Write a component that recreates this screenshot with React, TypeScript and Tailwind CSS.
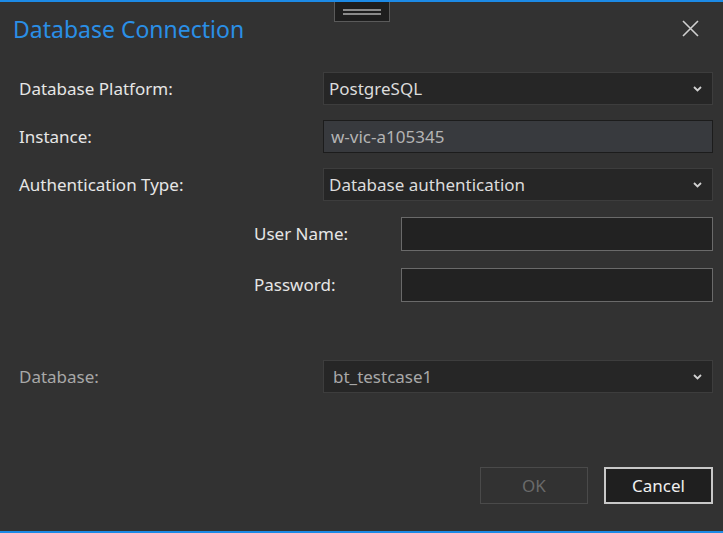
import React from "react";

const font = { fontFamily: '"Noto Sans", "Open Sans", sans-serif' };

function Chevron() {
  return (
    <svg width="9" height="6" viewBox="0 0 9 6" className="shrink-0">
      <path d="M1 1 L4.5 4.5 L8 1" stroke="#d0d0d0" strokeWidth="1.8" fill="none" />
    </svg>
  );
}

function Select({ value, disabled }: { value: string; disabled?: boolean }) {
  return (
    <div
      className={
        disabled
          ? "w-[390px] h-[33px] flex items-center justify-between bg-[#262626] border border-[#3d3d3d] pl-[9px] pr-[10px]"
          : "w-[390px] h-[33px] flex items-center justify-between bg-[#262626] border border-[#3d3d3d] pl-[5px] pr-[10px]"
      }
    >
      <span className={disabled ? "text-[17px] text-[#a8a8a8]" : "text-[17px] text-[#dcdcdc]"}>{value}</span>
      <Chevron />
    </div>
  );
}

export default function App() {
  return (
    <div
      className="relative w-[723px] h-[533px] bg-[#323232] border-t-2 border-b-2 border-[#1c8ae6] flex flex-col overflow-hidden"
      style={font}
    >
      <div className="absolute left-[334px] top-0 w-[56px] h-[20px] border border-t-0 border-[#5a5a5a] bg-[#1e1e1e] flex flex-col items-center justify-center gap-[2px]">
        <div className="w-[38px] h-[2px] bg-[#8a8a8a]" />
        <div className="w-[38px] h-[2px] bg-[#8a8a8a]" />
      </div>

      <div className="flex items-center justify-between pl-[13px] pr-[24px] h-[52px]">
        <span className="text-[23px] text-[#2a8fe6] mt-[2px]">Database Connection</span>
        <svg width="17" height="17" viewBox="0 0 17 17">
          <path d="M1 1 L16 16 M16 1 L1 16" stroke="#cfcfcf" strokeWidth="1.6" />
        </svg>
      </div>

      <div className="flex flex-col pl-[19px] pr-[10px] mt-[18px]">
        <div className="flex items-center justify-between h-[33px]">
          <span className="text-[17px] text-[#e6e6e6]">Database Platform:</span>
          <Select value="PostgreSQL" />
        </div>
        <div className="flex items-center justify-between h-[33px] mt-[15px]">
          <span className="text-[17px] text-[#e6e6e6]">Instance:</span>
          <div className="w-[390px] h-[33px] flex items-center bg-[#383a3e] border border-[#1c1c1c] pl-[7px]">
            <span className="text-[17px] text-[#b4b4b4]">w-vic-a105345</span>
          </div>
        </div>
        <div className="flex items-center justify-between h-[33px] mt-[15px]">
          <span className="text-[17px] text-[#e6e6e6]">Authentication Type:</span>
          <Select value="Database authentication" />
        </div>

        <div className="flex items-center justify-between h-[34px] mt-[16px] pl-[235px]">
          <span className="text-[17px] text-[#e6e6e6]">User Name:</span>
          <div className="w-[312px] h-[34px] bg-[#222222] border border-[#6a6a6a]" />
        </div>
        <div className="flex items-center justify-between h-[34px] mt-[17px] pl-[235px]">
          <span className="text-[17px] text-[#e6e6e6]">Password:</span>
          <div className="w-[312px] h-[34px] bg-[#222222] border border-[#6a6a6a]" />
        </div>

        <div className="flex items-center justify-between h-[33px] mt-[58px]">
          <span className="text-[17px] text-[#a8a8a8]">Database:</span>
          <Select value="bt_testcase1" disabled />
        </div>
      </div>

      <div className="flex justify-end gap-[16px] pr-[10px] mt-auto mb-[27px]">
        <div className="w-[108px] h-[37px] border border-[#4a4a4a] flex items-center justify-center text-[17px] text-[#6a6a6a]">
          OK
        </div>
        <div className="w-[109px] h-[37px] border-2 border-[#c8c8c8] bg-[#1f1f1f] flex items-center justify-center text-[17px] text-[#f0f0f0]">
          Cancel
        </div>
      </div>
    </div>
  );
}
